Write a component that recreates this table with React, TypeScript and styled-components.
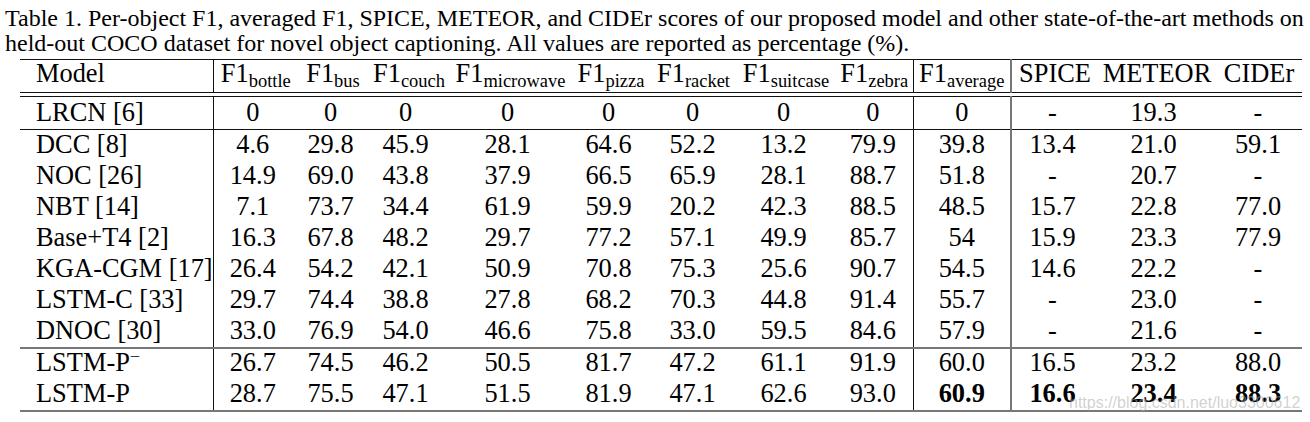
import React from "react";
import styled, { createGlobalStyle } from "styled-components";

const Global = createGlobalStyle`
  html, body { margin: 0; padding: 0; background: #ffffff; }
  body { font-family: "Liberation Serif", "Times New Roman", serif; color: #000; }
`;

const Page = styled.div`
  position: relative;
  width: 1310px;
  height: 422px;
  overflow: hidden;
  background: #fff;
`;

const Caption = styled.p`
  margin: 0;
  padding: 6px 0 0 5px;
  font-size: 24px;
  line-height: 24.5px;
  white-space: nowrap;
`;

const Table = styled.table`
  margin: 4px 0 0 20px;
  border-collapse: collapse;
  table-layout: fixed;
  width: 1282px;
  font-size: 26.4px;
  line-height: 1;
`;

type Rule = "none" | "thin" | "gray";

const ruleCss = (r?: Rule) =>
  r === "thin" ? "1px solid #111" : r === "gray" ? "2px solid #777" : "none";

const Row = styled.tr<{ $h: number; $top?: Rule; $bottom?: Rule }>`
  height: ${(p) => p.$h}px;
  border-top: ${(p) => ruleCss(p.$top)};
  border-bottom: ${(p) => ruleCss(p.$bottom)};
`;

const Cell = styled.td<{ $left?: boolean; $right?: Rule; $bold?: boolean; $lift?: number; $shift?: number }>`
  padding: 0 ${(p) => p.$shift ?? 0}px ${(p) => p.$lift ?? 2}px ${(p) => (p.$left ? 16 : 0)}px;
  text-align: ${(p) => (p.$left ? "left" : "center")};
  border-right: ${(p) => ruleCss(p.$right)};
  font-weight: ${(p) => (p.$bold ? 700 : 400)};
  white-space: nowrap;
  vertical-align: middle;
`;

const Spacer = styled.td`
  padding: 0;
  height: 3px;
  line-height: 0;
  font-size: 0;
`;

const Sub = styled.sub`
  font-size: 0.7em;
  vertical-align: -0.28em;
  line-height: 0;
`;

const Sup = styled.sup`
  font-size: 0.7em;
  vertical-align: 0.45em;
  line-height: 0;
`;

const Watermark = styled.span`
  position: absolute;
  left: 1069px;
  top: 394px;
  font-family: "Liberation Sans", Arial, sans-serif;
  font-size: 16px;
  color: rgba(170, 170, 170, 0.55);
  white-space: nowrap;
  pointer-events: none;
`;

const widths = [193, 85, 70, 82, 121, 80, 85, 100, 77, 98, 87, 118, 86];

const subs = ["bottle", "bus", "couch", "microwave", "pizza", "racket", "suitcase", "zebra"];

type Data = { name: React.ReactNode; v: string[]; bold?: number[] };

const first: Data[] = [
  { name: "LRCN [6]", v: ["0", "0", "0", "0", "0", "0", "0", "0", "0", "-", "19.3", "-"] },
];

const middle: Data[] = [
  { name: "DCC [8]", v: ["4.6", "29.8", "45.9", "28.1", "64.6", "52.2", "13.2", "79.9", "39.8", "13.4", "21.0", "59.1"] },
  { name: "NOC [26]", v: ["14.9", "69.0", "43.8", "37.9", "66.5", "65.9", "28.1", "88.7", "51.8", "-", "20.7", "-"] },
  { name: "NBT [14]", v: ["7.1", "73.7", "34.4", "61.9", "59.9", "20.2", "42.3", "88.5", "48.5", "15.7", "22.8", "77.0"] },
  { name: "Base+T4 [2]", v: ["16.3", "67.8", "48.2", "29.7", "77.2", "57.1", "49.9", "85.7", "54", "15.9", "23.3", "77.9"] },
  { name: "KGA-CGM [17]", v: ["26.4", "54.2", "42.1", "50.9", "70.8", "75.3", "25.6", "90.7", "54.5", "14.6", "22.2", "-"] },
  { name: "LSTM-C [33]", v: ["29.7", "74.4", "38.8", "27.8", "68.2", "70.3", "44.8", "91.4", "55.7", "-", "23.0", "-"] },
  { name: "DNOC [30]", v: ["33.0", "76.9", "54.0", "46.6", "75.8", "33.0", "59.5", "84.6", "57.9", "-", "21.6", "-"] },
];

const last: Data[] = [
  {
    name: (
      <>
        LSTM-P<Sup>−</Sup>
      </>
    ),
    v: ["26.7", "74.5", "46.2", "50.5", "81.7", "47.2", "61.1", "91.9", "60.0", "16.5", "23.2", "88.0"],
  },
  {
    name: "LSTM-P",
    v: ["28.7", "75.5", "47.1", "51.5", "81.9", "47.1", "62.6", "93.0", "60.9", "16.6", "23.4", "88.3"],
    bold: [8, 9, 10, 11],
  },
];

const rightRule = (i: number): Rule | undefined => (i === 7 ? "thin" : i === 8 ? "gray" : undefined);
const valueShift = [6, 5, 7, 6, 5, 2, 5, 3, 0, 5, 7, 2];

const DataRow: React.FC<{ d: Data; h: number; top?: Rule; bottom?: Rule }> = ({ d, h, top, bottom }) => (
  <Row $h={h} $top={top} $bottom={bottom}>
    <Cell $left $right="thin">
      {d.name}
    </Cell>
    {d.v.map((x, i) => (
      <Cell key={i} $right={rightRule(i)} $bold={d.bold?.includes(i)} $shift={valueShift[i]}>
        {x}
      </Cell>
    ))}
  </Row>
);

export default function App() {
  return (
    <Page>
      <Global />
      <Caption>
        Table 1. Per-object F1, averaged F1, SPICE, METEOR, and CIDEr scores of our proposed model and other state-of-the-art methods on
        <br />
        held-out COCO dataset for novel object captioning. All values are reported as percentage (%).
      </Caption>
      <Table>
        <colgroup>
          {widths.map((w, i) => (
            <col key={i} style={{ width: w }} />
          ))}
        </colgroup>
        <tbody>
          <Row $h={33} $top="thin" $bottom="thin">
            <Cell $left $right="thin" $lift={5}>
              Model
            </Cell>
            {subs.map((s, i) => (
              <Cell key={s} $right={rightRule(i)} $lift={5}>
                F1<Sub>{s}</Sub>
              </Cell>
            ))}
            <Cell $right="gray" $lift={5}>
              F1<Sub>average</Sub>
            </Cell>
            <Cell $lift={5}>SPICE</Cell>
            <Cell $lift={5}>METEOR</Cell>
            <Cell $lift={5}>CIDEr</Cell>
          </Row>
          <Row $h={3} $bottom="thin">
            <Spacer colSpan={13} />
          </Row>
          {first.map((d, i) => (
            <DataRow key={i} d={d} h={33} bottom="thin" />
          ))}
          {middle.map((d, i) => (
            <DataRow key={i} d={d} h={i === middle.length - 1 ? 32 : 31} bottom={i === middle.length - 1 ? "gray" : undefined} />
          ))}
          {last.map((d, i) => (
            <DataRow key={i} d={d} h={i === 0 ? 31 : 32} bottom={i === last.length - 1 ? "gray" : undefined} />
          ))}
        </tbody>
      </Table>
      <Watermark>https://blog.csdn.net/luo3300612</Watermark>
    </Page>
  );
}
